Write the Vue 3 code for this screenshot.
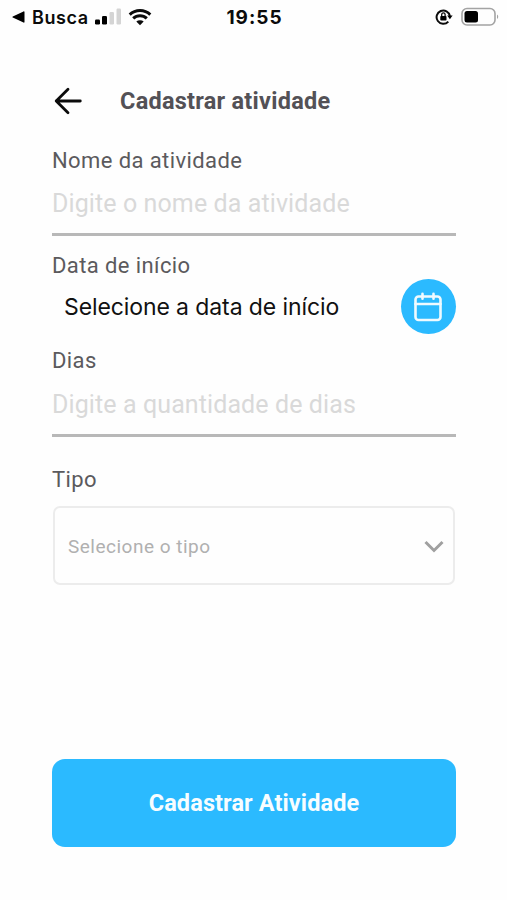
<template>
  <div class="screen">
    <div class="status-bar">
      <div class="status-left">
        <svg class="back-app" viewBox="0 0 13 12" width="13" height="12">
          <path d="M12.500 1v10c0 .6-.5.900-1 .6L.8 6.600c-.5-.3-.5-.9 0-1.200L11.500.4c.5-.3 1 0 1 .6z" />
        </svg>
        <span class="status-app">Busca</span>
        <svg class="signal" viewBox="0 0 27 18" width="27" height="18">
          <rect x="0" y="11.500" width="5" height="5" rx="1.200" />
          <rect x="7" y="8" width="5" height="8.500" rx="1.200" />
          <rect class="signal-off" x="14.500" y="4" width="4.500" height="12.500" rx="1.200" />
          <rect class="signal-off" x="21.500" y="0.500" width="4.500" height="16" rx="1.200" />
        </svg>
        <svg class="wifi" viewBox="0 0 24 18" width="24" height="18">
          <path d="M1.700 6.600a15 15 0 0 1 20.600 0M5.200 10.400a9.800 9.800 0 0 1 13.600 0" />
          <path class="wifi-dot" d="M12 17.300l-3.700-3.700a5.400 5.400 0 0 1 7.400 0z" />
        </svg>
      </div>
      <span class="status-time">19:55</span>
      <div class="status-right">
        <svg class="lock" viewBox="0 0 18 18" width="18" height="18">
          <path class="lock-ring" d="M13.300 13.600a6.700 6.700 0 1 1 1.600-5.600" />
          <path d="M12.200 7.600h5.400l-2.700 3.700z" />
          <rect x="5.300" y="7.900" width="6.200" height="4.700" rx=".8" />
          <path class="lock-shackle" d="M6.700 8V6.600a1.700 1.700 0 0 1 3.400 0V8" />
        </svg>
        <svg class="battery" viewBox="0 0 38 20" width="38" height="20">
          <rect class="battery-case" x="1" y="1.500" width="33" height="16.500" rx="5" />
          <rect x="3.500" y="4" width="13.500" height="11.500" rx="2.500" />
          <path class="battery-tip" d="M36 7.500c1.700.8 1.700 3.700 0 4.500z" />
        </svg>
      </div>
    </div>

    <header class="header">
      <button class="back-button" aria-label="Voltar">
        <svg viewBox="0 0 28 28" width="28" height="28">
          <path d="M26.300 14H2.200M14 2.200L2.200 14 14 25.800" />
        </svg>
      </button>
      <h1 class="title">Cadastrar atividade</h1>
    </header>

    <form class="form" @submit.prevent>
      <label class="label" for="nome">Nome da atividade</label>
      <input id="nome" v-model="nome" class="input" placeholder="Digite o nome da atividade" />

      <span class="label label-date">Data de início</span>
      <div class="date-row">
        <span class="date-text">Selecione a data de início</span>
        <button class="date-button" type="button" aria-label="Abrir calendário">
          <svg viewBox="0 0 28 30" width="28" height="30">
            <rect x="1.500" y="4.500" width="25" height="23.500" rx="3" />
            <path d="M1.500 12h25M8.500 1.800v5M19.500 1.800v5" />
          </svg>
        </button>
      </div>

      <label class="label label-days" for="dias">Dias</label>
      <input id="dias" v-model="dias" class="input input-days" placeholder="Digite a quantidade de dias" />

      <span class="label label-type">Tipo</span>
      <button class="select" type="button">
        <span class="select-text">Selecione o tipo</span>
        <svg viewBox="0 0 20 13" width="20" height="13">
          <path d="M1.500 2L10 10.500 18.500 2" />
        </svg>
      </button>

      <button class="submit-button" type="submit">
        <span class="submit-text">Cadastrar Atividade</span>
      </button>
    </form>
  </div>
</template>

<script setup>
import { ref } from 'vue'

// Campos do formulário
const nome = ref('')
const dias = ref('')
</script>

<style>
body {
  margin: 0;
  background-color: #fefefe;
}
</style>

<style scoped>
.screen {
  box-sizing: border-box;
  width: 100%;
  height: 900px;
  background-color: #fefefe;
  font-family: Roboto, sans-serif;
  overflow: hidden;
}

button {
  padding: 0;
  border: none;
  background: none;
  font-family: inherit;
  cursor: pointer;
}

svg {
  display: block;
  flex: none;
}

/* Barra de status */
.status-bar {
  box-sizing: border-box;
  display: grid;
  grid-template-columns: 1fr auto 1fr;
  align-items: center;
  height: 34px;
  padding: 0 8px 0 12px;
  font-family: Inter, sans-serif;
  color: #0b0b0b;
}

.status-left,
.status-right {
  display: flex;
  align-items: center;
}

.status-right {
  justify-content: flex-end;
  gap: 8px;
}

.status-app {
  margin-left: 7px;
  font-size: 18px;
  font-weight: 600;
  letter-spacing: 0.6px;
}

.signal {
  margin-left: 6px;
}

.signal-off {
  fill: #d4d4d4;
}

.wifi {
  margin-left: 6px;
  fill: none;
  stroke: #0b0b0b;
  stroke-width: 3;
}

.wifi-dot {
  fill: #0b0b0b;
  stroke: none;
}

.status-time {
  margin-right: 2px;
  font-size: 19px;
  font-weight: 700;
  letter-spacing: 1px;
}

.lock-ring {
  fill: none;
  stroke: #0b0b0b;
  stroke-width: 2;
}

.lock-shackle {
  fill: none;
  stroke: #0b0b0b;
  stroke-width: 1.3;
}

.battery-case {
  fill: none;
  stroke: #a3a3a3;
  stroke-width: 1.6;
}

.battery-tip {
  fill: #a3a3a3;
}

/* Cabeçalho */
.header {
  display: flex;
  align-items: center;
  height: 34px;
  padding: 50px 52px 0 54px;
}

.back-button svg {
  fill: none;
  stroke: #0b0b0b;
  stroke-width: 2.8;
  stroke-linecap: round;
  stroke-linejoin: round;
}

.title {
  margin: 0 0 0 38px;
  font-size: 23.5px;
  font-weight: 700;
  letter-spacing: 0.25px;
  color: #535156;
  white-space: nowrap;
}

/* Formulário */
.form {
  display: flex;
  flex-direction: column;
  padding: 29px 51px 0 52px;
}

.label {
  height: 27px;
  font-size: 22px;
  line-height: 28px;
  letter-spacing: 0.4px;
  color: #5b5a5d;
}

.input {
  box-sizing: border-box;
  width: 100%;
  height: 62px;
  padding: 0;
  border: none;
  border-bottom: 3px solid #b8b8b8;
  outline: none;
  background: none;
  font-family: inherit;
  font-size: 25px;
  letter-spacing: 0.1px;
  color: #5b5a5d;
}

.input::placeholder {
  color: #d9d9d9;
  opacity: 1;
}

.input-days {
  height: 63px;
}

.label-date {
  margin-top: 16px;
}

.date-row {
  display: flex;
  align-items: center;
  justify-content: space-between;
  height: 55px;
  padding-left: 12px;
}

.date-text {
  font-family: Inter, sans-serif;
  font-size: 23px;
  letter-spacing: -0.1px;
  color: #111;
  white-space: nowrap;
}

.date-button {
  display: flex;
  align-items: center;
  justify-content: center;
  width: 55px;
  height: 55px;
  padding-right: 1px;
  border-radius: 50%;
  background-color: #2bbaff;
}

.date-button svg {
  fill: none;
  stroke: #effaff;
  stroke-width: 2.6;
  stroke-linecap: round;
}

.label-days {
  margin-top: 13px;
}

.label-type {
  margin-top: 29px;
}

.select {
  box-sizing: border-box;
  display: flex;
  align-items: center;
  justify-content: space-between;
  height: 79px;
  margin: 13px 1px 0;
  padding: 1px 9px 0 13px;
  border: 2px solid #ececec;
  border-radius: 7px;
}

.select-text {
  font-size: 19px;
  letter-spacing: 0.5px;
  color: #b0b0b0;
}

.select svg {
  fill: none;
  stroke: #a0a0a0;
  stroke-width: 3;
}

.submit-button {
  height: 88px;
  margin-top: 174px;
  border-radius: 13px;
  background-color: #2bbaff;
}

.submit-text {
  font-size: 23.5px;
  font-weight: 700;
  letter-spacing: 0.1px;
  color: #f7fdff;
}
</style>
